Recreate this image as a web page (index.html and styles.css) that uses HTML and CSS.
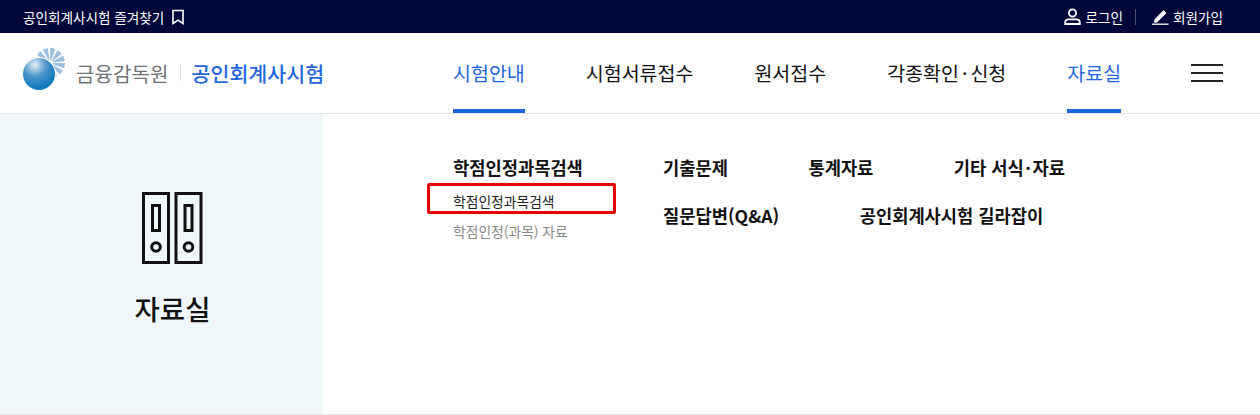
FILE: index.html
```html
<!DOCTYPE html>
<html lang="ko">
<head>
    <meta charset="UTF-8">
    <title>공인회계사시험</title>
    <link rel="stylesheet" href="styles.css">
</head>

<body>
<div class="top-bar">
    <a class="fav">공인회계사시험 즐겨찾기
        <svg width="14" height="16" viewBox="0 0 14 16"><path d="M2 1.500h10v13l-5-3.400-5 3.400z" fill="none" stroke="#fff" stroke-width="1.600"/></svg>
    </a>
    <div class="util">
        <a class="util-item">
            <svg width="17" height="17" viewBox="0 0 17 17"><circle cx="8.500" cy="5" r="3.600" fill="none" stroke="#fff" stroke-width="1.800"/><path d="M1.200 16v-1.500c0-2 1.600-3.200 3.600-3.200h7.400c2 0 3.600 1.200 3.600 3.200V16z" fill="none" stroke="#fff" stroke-width="1.800"/></svg>
            로그인
        </a>
        <span class="util-line"></span>
        <a class="util-item">
            <svg width="17" height="17" viewBox="0 0 17 17"><path d="M3 11.500 11.600 2.600l2.400 2.400-8.700 8.800-2.800.5z" fill="#fff" stroke="#fff" stroke-width="1"/><path d="M0 16.200h16.500" stroke="#fff" stroke-width="1.300"/></svg>
            회원가입
        </a>
    </div>
</div>

<div class="header">
    <div class="logo">
        <svg class="logo-mark" width="44" height="44" viewBox="0 0 44 44">
            <defs>
                <radialGradient id="ball" cx="37%" cy="22%" r="80%">
                    <stop offset="0" stop-color="#e8eef3"/>
                    <stop offset="0.45" stop-color="#4b95cb"/>
                    <stop offset="1" stop-color="#0474b9"/>
                </radialGradient>
            </defs>
            <circle cx="27" cy="16" r="9" fill="none" stroke="#9dbfe0" stroke-width="12" stroke-dasharray="3.200 1.500"/>
            <circle cx="16" cy="27" r="17" fill="#fff"/>
            <circle cx="16" cy="27" r="16" fill="url(#ball)"/>
        </svg>
        <span class="logo-fss">금융감독원</span>
        <span class="logo-line"></span>
        <span class="logo-name">공인회계사시험</span>
    </div>
    <ul class="nav">
        <li class="on">시험안내</li>
        <li>시험서류접수</li>
        <li>원서접수</li>
        <li>각종확인<span class="dot">·</span>신청</li>
        <li class="on">자료실</li>
    </ul>
    <div class="ham"><span></span><span></span><span></span></div>
</div>

<div class="main">
    <div class="side">
        <svg width="61" height="72" viewBox="0 0 61 72">
            <g fill="none" stroke="#111" stroke-width="3">
                <rect x="1.500" y="1.500" width="25" height="69"/>
                <rect x="34" y="1.500" width="25" height="69"/>
                <rect x="10.500" y="13.500" width="7" height="25"/>
                <rect x="43" y="13.500" width="7" height="25"/>
                <circle cx="14" cy="55" r="4.300"/>
                <circle cx="46.500" cy="55" r="4.300"/>
            </g>
        </svg>
        <p class="side-tit">자료실</p>
    </div>
    <div class="menu">
        <div class="menu-col">
            <p class="menu-tit">학점인정과목검색</p>
            <ul class="sub">
                <li class="cur">학점인정과목검색</li>
                <li>학점인정(과목) 자료</li>
            </ul>
            <div class="red-box"></div>
        </div>
        <div class="menu-rest">
            <p class="menu-tit">기출문제</p>
            <p class="menu-tit">통계자료</p>
            <p class="menu-tit">기타 서식<span class="dot-sm">·</span>자료</p>
            <p class="menu-tit">질문답변(Q&amp;A)</p>
            <p class="menu-tit">공인회계사시험 길라잡이</p>
        </div>
    </div>
</div>
</body>
</html>
```

FILE: styles.css
```css
* { margin: 0; padding: 0; box-sizing: border-box; }
li { list-style: none; }
body { width: 1260px; height: 415px; overflow: hidden; background: #fff; color: #111; font-family: "Noto Sans CJK KR", "Noto Sans", sans-serif; }
.dot { margin: 0 3px; }
.dot-sm { margin: 0 1.500px; }

/*top*/
.top-bar { height: 33px; background: #00063a; color: #fff; font-size: 13.600px; display: flex; justify-content: space-between; align-items: center; padding: 0 37px 0 23px; }
.fav { display: flex; align-items: center; gap: 7px; }
.util { display: flex; align-items: center; }
.util-item { display: flex; align-items: center; gap: 4px; }
.util-line { width: 1px; height: 16px; background: #4a4e70; margin: 0 16px 0 12px; }

/*header*/
.header { height: 81px; border-bottom: 1px solid #e6e6e6; display: flex; padding-left: 23px; }
.logo { width: 430px; display: flex; align-items: center; }
.logo-mark { margin-bottom: 8px; }
.logo-fss { font-size: 20px; color: #6f7274; margin-left: 9px; letter-spacing: .1px; }
.logo-line { width: 1px; height: 16px; background: #ddd; margin: 0 11px; }
.logo-name { font-size: 20.600px; font-weight: 500; color: #1f66dc; }
.nav { display: flex; gap: 61px; }
.nav li { font-size: 19.500px; line-height: 80px; height: 80px; }
.nav li.on { color: #1f66dc; border-bottom: 4px solid #1f66dc; }
.ham { margin-left: 70px; width: 32px; padding-top: 31px; }
.ham span { display: block; height: 2px; background: #222; margin-bottom: 6px; }

/*main*/
.main { height: 301px; border-bottom: 1px solid #e6e6e6; display: flex; }
.side { width: 323px; background: #eff7fb; display: flex; flex-direction: column; align-items: center; padding: 78px 0 0 22px; }
.side-tit { font-size: 27.500px; font-weight: 500; margin-top: 24px; }
.menu { display: flex; padding: 41px 0 0 130px; }
.menu-col { width: 210px; position: relative; }
.menu-tit { font-size: 17.650px; font-weight: 700; line-height: 26px; }
.sub { margin-top: 6px; }
.sub li { font-size: 13.800px; line-height: 29.500px; color: #888; }
.sub li.cur { color: #222; }
.red-box { position: absolute; left: -26px; top: 28px; width: 189px; height: 31px; border: 3px solid #e60000; border-radius: 2px; }
.menu-rest { width: 500px; display: flex; flex-wrap: wrap; gap: 22px 80.500px; align-content: flex-start; }
```
